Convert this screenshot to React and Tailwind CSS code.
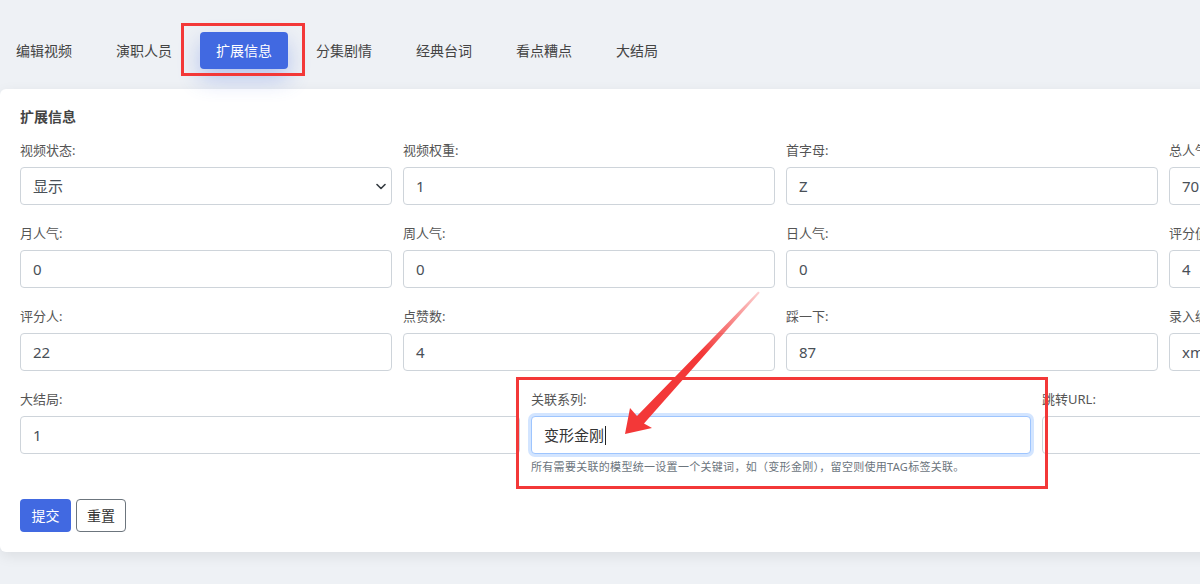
import React from "react";

const FONT = {
  fontFamily:
    '"Noto Sans", "Noto Sans CJK SC", "Liberation Sans", sans-serif',
};

function Field({ label, value, children }) {
  return (
    <div className="flex flex-col">
      <div className="mb-[7px] text-[13px] leading-5 text-[#555]">{label}</div>
      {children ? (
        children
      ) : (
        <div className="flex h-[38px] items-center rounded-[4px] border border-[#ced4da] bg-white px-3 text-[15px] whitespace-nowrap overflow-hidden text-[#495057]">
          {value}
        </div>
      )}
    </div>
  );
}

export default function App() {
  const tabs = ["编辑视频", "演职人员", "扩展信息", "分集剧情", "经典台词", "看点糟点", "大结局"];
  return (
    <div
      className="relative h-[584px] w-[1200px] overflow-hidden bg-[#eef1f5]"
      style={FONT}
    >
      {/* tabs */}
      <div className="relative z-10 flex gap-3 pt-8">
        {tabs.map((t, i) =>
          i === 2 ? (
            <div
              key={t}
              className="rounded-[4px] bg-[#4169e1] px-4 py-2 text-[14px] leading-[21px] text-white shadow-[0_10px_22px_rgba(65,105,225,0.32)]"
            >
              {t}
            </div>
          ) : (
            <div key={t} className="px-4 py-2 text-[14px] leading-[21px] text-[#444]">
              {t}
            </div>
          )
        )}
      </div>

      {/* card */}
      <div className="mt-5 w-[1562px] rounded-md bg-white px-5 pt-[18px] pb-5 shadow-[0_4px_14px_rgba(0,0,0,0.08)]">
        <div className="text-[14px] font-bold leading-5 text-[#444]">扩展信息</div>

        <div className="mt-[13px] grid grid-cols-[repeat(4,372px)] gap-x-[11px] gap-y-[18px]">
          <Field label="视频状态:">
            <div className="flex h-[38px] items-center justify-between rounded-[4px] border border-[#ced4da] bg-white pl-3 pr-[5px] text-[15px] text-[#495057]">
              <span>显示</span>
              <svg width="10" height="7" viewBox="0 0 10 7" fill="none">
                <path d="M1 1.5 5 5.5 9 1.5" stroke="#343a40" strokeWidth="1.6" strokeLinecap="round" strokeLinejoin="round" />
              </svg>
            </div>
          </Field>
          <Field label="视频权重:" value="1" />
          <Field label="首字母:" value="Z" />
          <Field label="总人气:" value="70" />
          <Field label="月人气:" value="0" />
          <Field label="周人气:" value="0" />
          <Field label="日人气:" value="0" />
          <Field label="评分值:" value="4" />
          <Field label="评分人:" value="22" />
          <Field label="点赞数:" value="4" />
          <Field label="踩一下:" value="87" />
          <Field label="录入编辑:" value="xmcms" />
        </div>

        <div className="mt-[18px] grid grid-cols-[repeat(3,500px)] gap-x-[11px]">
          <Field label="大结局:" value="1" />
          <div className="flex flex-col">
            <div className="mb-[7px] text-[13px] leading-5 text-[#555]">关联系列:</div>
            <div className="flex h-[38px] items-center rounded-[4px] border border-[#9ec5fe] bg-white px-3 text-[15px] text-[#333] shadow-[0_0_0_3px_rgba(13,110,253,0.18)]">
              <span>变形金刚</span>
              <span className="ml-[1px] inline-block h-[19px] w-[1px] bg-[#222]" />
            </div>
            <div className="mt-[5px] text-[11px] leading-4 tracking-[0.3px] text-[#6c757d] whitespace-nowrap">
              所有需要关联的模型统一设置一个关键词，如（变形金刚），留空则使用TAG标签关联。
            </div>
          </div>
          <Field label="跳转URL:" value="" />
        </div>

        <div className="mt-6 flex gap-[5px]">
          <button className="h-[33px] w-[51px] rounded-[4px] bg-[#4169e1] text-[14px] text-white">
            提交
          </button>
          <button className="h-[33px] w-[50px] rounded-[4px] border border-[#6c757d] bg-white text-[14px] text-[#333]">
            重置
          </button>
        </div>
      </div>

      {/* annotations */}
      <div className="pointer-events-none absolute left-[181px] top-[23px] z-20 h-[53px] w-[124px] border-[3px] border-[#f33838]" />
      <div className="pointer-events-none absolute left-[516px] top-[377px] z-20 h-[112px] w-[532px] border-[3px] border-[#f33838]" />
      <svg
        className="pointer-events-none absolute left-0 top-0 z-30"
        width="1200"
        height="584"
        viewBox="0 0 1200 584"
      >
        <defs>
          <linearGradient id="arr" gradientUnits="userSpaceOnUse" x1="762" y1="290" x2="705" y2="355">
            <stop offset="0" stopColor="#f33838" stopOpacity="0.2" />
            <stop offset="1" stopColor="#f33838" stopOpacity="1" />
          </linearGradient>
        </defs>
        <polygon
          points="625,434 630,408 637,416 758.2,291.5 759.8,292.8 644,423.5 652,428"
          fill="url(#arr)"
        />
      </svg>
    </div>
  );
}
